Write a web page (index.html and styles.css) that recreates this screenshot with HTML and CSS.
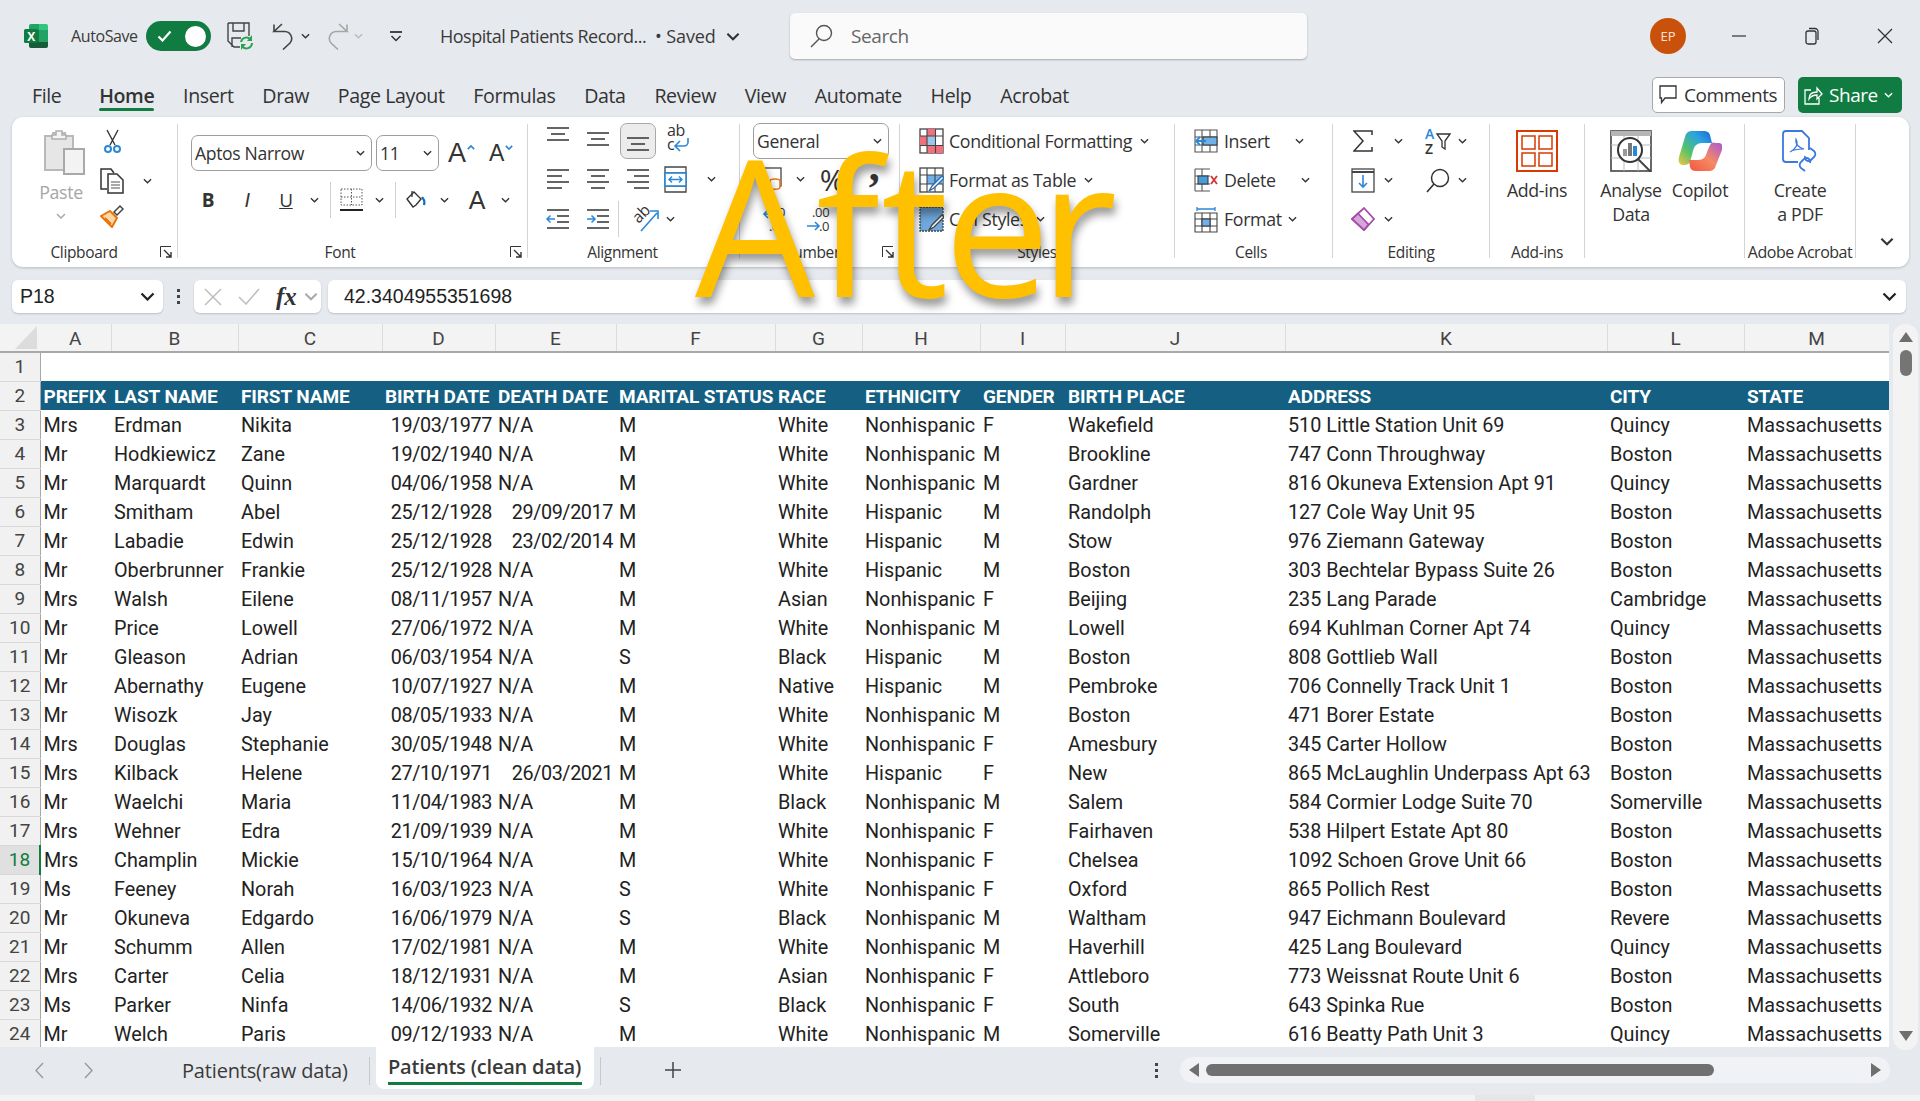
FILE: index.html
```html
<!DOCTYPE html>
<html lang="en">
<head>
    <meta charset="UTF-8">
    <title>Hospital Patients Records - Excel</title>
    <link rel="stylesheet" href="styles.css">
</head>
<body>
<svg class="sprite" width="0" height="0">
    <symbol id="chev" viewBox="0 0 10 6"><path d="M1 1l4 4 4-4" fill="none" stroke="currentColor" stroke-width="1.5"/></symbol>
</svg>

<div class="app">
    <!-- title bar -->
    <header class="titlebar">
        <svg class="logo" width="24" height="24" viewBox="0 0 24 24">
            <path d="M7 0h8v6H5V2a2 2 0 0 1 2-2z" fill="#21a366"/>
            <path d="M15 0h7a2 2 0 0 1 2 2v4h-9z" fill="#33c481"/>
            <rect x="5" y="6" width="10" height="12" fill="#107c41"/>
            <rect x="15" y="6" width="9" height="12" fill="#21a366"/>
            <path d="M5 18h19v4a2 2 0 0 1-2 2H7a2 2 0 0 1-2-2z" fill="#185c37"/>
            <rect x="0" y="5" width="14" height="14" rx="1.5" fill="#107c41"/>
            <text x="7" y="16.5" class="logo-x">X</text>
        </svg>
        <span class="autosave">AutoSave</span>
        <div class="toggle">
            <svg width="15" height="12" viewBox="0 0 15 12"><path d="M1.5 6.5l4 4 8-9" fill="none" stroke="#fff" stroke-width="2.2"/></svg>
            <span class="knob"></span>
        </div>
        <svg class="qat-save" width="26" height="28" viewBox="0 0 26 28">
            <path d="M1 1h21v13M1 1v18l6 6h6M6 1v8h11V1M5 25v-9h9" fill="none" stroke="#444" stroke-width="1.4"/>
            <path d="M14 20a5.500 5.500 0 0 1 10-2M25 21a5.500 5.500 0 0 1-10 3" fill="none" stroke="#2ca24f" stroke-width="2"/>
            <path d="M25 13v6h-5zM14 28v-6h5z" fill="#2ca24f"/>
        </svg>
        <svg class="qat-undo" width="22" height="27" viewBox="0 0 22 27"><path d="M10 1L2 8.500h11a7 7 0 0 1 5 11.500l-7 6.500M2 8.500V1.500" fill="none" stroke="#444" stroke-width="1.6"/></svg>
        <svg class="qat-chev" width="9" height="6"><use href="#chev"/></svg>
        <svg class="qat-redo" width="22" height="27" viewBox="0 0 22 27"><path d="M12 1l8 7.500H9A7 7 0 0 0 4 20l7 6.500M20 8.500V1.500" fill="none" stroke="#a6a6a6" stroke-width="1.6"/></svg>
        <svg class="qat-chev off" width="9" height="6"><use href="#chev"/></svg>
        <svg class="qat-more" width="12" height="11" viewBox="0 0 12 11"><path d="M0 1h12" stroke="#333" stroke-width="1.800"/><path d="M1.500 5l4.500 4.500L10.500 5" fill="none" stroke="#333" stroke-width="1.500"/></svg>
        <span class="docname">Hospital Patients Record...</span>
        <span class="saved">• Saved</span>
        <svg class="doc-chev" width="14" height="9"><use href="#chev"/></svg>
        <div class="search">
            <svg width="23" height="24" viewBox="0 0 23 24"><circle cx="14" cy="9" r="7.500" fill="none" stroke="#555" stroke-width="1.400"/><path d="M9 15l-8 8" stroke="#555" stroke-width="1.400"/></svg>
            <span>Search</span>
        </div>
        <div class="avatar">EP</div>
        <div class="winbtns">
            <svg width="16" height="16" viewBox="0 0 16 16"><path d="M1 8h14" stroke="#333" stroke-width="1.200"/></svg>
            <svg width="16" height="18" viewBox="0 0 16 18"><rect x="2" y="4" width="10" height="13" rx="2" fill="none" stroke="#333" stroke-width="1.300"/><path d="M5 1.500h6a3 3 0 0 1 3 3V13" fill="none" stroke="#333" stroke-width="1.300"/></svg>
            <svg width="16" height="16" viewBox="0 0 16 16"><path d="M1 1l14 14M15 1L1 15" stroke="#333" stroke-width="1.300"/></svg>
        </div>
    </header>

    <!-- ribbon tabs -->
    <nav class="tabs">
        <a>File</a><a class="current">Home</a><a>Insert</a><a>Draw</a><a>Page Layout</a><a>Formulas</a><a>Data</a><a>Review</a><a>View</a><a>Automate</a><a>Help</a><a>Acrobat</a>
        <div class="tabs-right">
            <button class="btn-comments">
                <svg width="18" height="20" viewBox="0 0 18 20"><path d="M1 1h16v12H6l-3.500 4.500V13H1z" fill="none" stroke="#333" stroke-width="1.300"/></svg>
                Comments
            </button>
            <button class="btn-share">
                <svg width="19" height="20" viewBox="0 0 19 20"><path d="M7 5H1v14h14v-6M5 14c0-5 3-7 8-7V3l5 6-5 5v-4c-3 0-6 1-8 4z" fill="none" stroke="#fff" stroke-width="1.300"/></svg>
                Share
                <svg width="9" height="6"><use href="#chev"/></svg>
            </button>
        </div>
    </nav>

    <!-- ribbon -->
    <section class="ribbon">
        <div class="group g-clip">
            <div class="group-body clip-body">
                <div class="paste">
                    <svg class="paste-icon" width="41" height="45" viewBox="0 0 41 45">
                        <path d="M1 6h8V3h12v3h8v34H1z" fill="#e6e6e6" stroke="#b9b9b9" stroke-width="2"/>
                        <path d="M12 1h6v4h4v4H8V5h4z" fill="#f4f4f4" stroke="#b0b0b0" stroke-width="1.500"/>
                        <rect x="20" y="19" width="20" height="25" fill="#f3f3f3" stroke="#a9a9a9" stroke-width="2"/>
                    </svg>
                    <span>Paste</span>
                    <svg class="paste-chev" width="10" height="6"><use href="#chev"/></svg>
                </div>
                <div class="clip-small">
                    <svg class="scissors" width="17" height="25" viewBox="0 0 17 25">
                        <path d="M3 1l8 15M14 1L6 16" stroke="#333" stroke-width="1.400"/>
                        <circle cx="4" cy="20" r="3" fill="none" stroke="#2b88d8" stroke-width="2"/>
                        <circle cx="13" cy="20" r="3" fill="none" stroke="#2b88d8" stroke-width="2"/>
                    </svg>
                    <div class="copy-row">
                        <svg width="24" height="26" viewBox="0 0 24 26">
                            <path d="M7 21H1V1h10l3 4" fill="none" stroke="#333" stroke-width="1.500"/>
                            <path d="M8 6h9l6 6v13H8z" fill="#fff" stroke="#333" stroke-width="1.500"/>
                            <path d="M11 14h9M11 17h9M11 20h9" stroke="#555" stroke-width="1.200"/>
                        </svg>
                        <svg class="chev-sm" width="9" height="6"><use href="#chev"/></svg>
                    </div>
                    <svg class="brush" width="24" height="24" viewBox="0 0 24 24">
                        <path d="M1 12l9-5 7 7-5 9z" fill="#fbd7a8" stroke="#e8750a" stroke-width="2"/>
                        <path d="M5 14l6 6" stroke="#e8750a" stroke-width="2"/>
                        <path d="M14 8l6-6 3 3-6 6z" fill="#fff" stroke="#444" stroke-width="1.500"/>
                    </svg>
                </div>
            </div>
            <div class="group-label"><span></span><span class="lbl">Clipboard</span><svg class="launcher" width="12" height="12" viewBox="0 0 12 12"><path d="M.5 11V.5H11" fill="none" stroke="#333"/><path d="M4 4l7 7M11 6v5H6" fill="none" stroke="#333" stroke-width="1.400"/></svg></div>
        </div>

        <div class="group g-font">
            <div class="group-body font-body">
                <div class="row font-row1">
                    <div class="select w181">Aptos Narrow<svg width="9" height="6"><use href="#chev"/></svg></div>
                    <div class="select w63">11<svg width="9" height="6"><use href="#chev"/></svg></div>
                    <div class="fsize grow">A<svg width="8" height="5" viewBox="0 0 10 6"><path d="M1 5l4-4 4 4" fill="none" stroke="#2b88d8" stroke-width="2"/></svg></div>
                    <div class="fsize shrink">A<svg width="8" height="5" viewBox="0 0 10 6"><path d="M1 1l4 4 4-4" fill="none" stroke="#2b88d8" stroke-width="2"/></svg></div>
                </div>
                <div class="row font-row2">
                    <span class="cell w40 fmt-b">B</span>
                    <span class="cell w38 fmt-i">I</span>
                    <span class="cell w40 fmt-u">U</span>
                    <span class="cell w16"><svg width="9" height="6"><use href="#chev"/></svg></span>
                    <span class="sep"></span>
                    <span class="cell w24">
                        <svg width="23" height="24" viewBox="0 0 23 24"><path d="M1 1h21v16H1zM11.500 1v16M1 9h21" fill="none" stroke="#555" stroke-width="1" stroke-dasharray="1.500 1.500"/><path d="M0 22h23" stroke="#222" stroke-width="2"/></svg>
                    </span>
                    <span class="cell w32"><svg width="9" height="6"><use href="#chev"/></svg></span>
                    <span class="sep flush"></span>
                    <span class="cell w24">
                        <svg width="20" height="20" viewBox="0 0 20 20"><path d="M1 9l7-7 7 7-5 6-3 2z" fill="none" stroke="#333" stroke-width="1.400"/><path d="M6 1v6" stroke="#333" stroke-width="1.300"/><path d="M16 7c2 3 3 4 2 8" fill="none" stroke="#106ebe" stroke-width="2.200"/></svg>
                    </span>
                    <span class="cell w32"><svg width="9" height="6"><use href="#chev"/></svg></span>
                    <span class="cell w34 fmt-a">A</span>
                    <span class="cell w22"><svg width="9" height="6"><use href="#chev"/></svg></span>
                </div>
            </div>
            <div class="group-label"><span></span><span class="lbl">Font</span><svg class="launcher" width="12" height="12" viewBox="0 0 12 12"><path d="M.5 11V.5H11" fill="none" stroke="#333"/><path d="M4 4l7 7M11 6v5H6" fill="none" stroke="#333" stroke-width="1.400"/></svg></div>
        </div>

        <div class="group g-align">
            <div class="group-body tool-rows align-body">
                <div class="row">
                    <span class="cell w40"><svg width="24" height="24" viewBox="0 0 24 24"><path d="M1 5h22M5 11h14M1 17h22" stroke="#333" stroke-width="1.500" transform="translate(0 -4)"/></svg></span>
                    <span class="cell w40"><svg width="24" height="24" viewBox="0 0 24 24"><path d="M1 5h22M5 11h14M1 17h22" stroke="#333" stroke-width="1.500" transform="translate(0 1)"/></svg></span>
                    <span class="cell w40 on-cell"><span class="on"><svg width="24" height="24" viewBox="0 0 24 24"><path d="M1 5h22M5 11h14M1 17h22" stroke="#333" stroke-width="1.500" transform="translate(0 4)"/></svg></span></span>
                    <span class="cell w40"><svg width="24" height="30" viewBox="0 0 24 30"><text x="1" y="12" class="t-ab">ab</text><text x="1" y="26" class="t-ab">c</text><path d="M22 14v4a4 4 0 0 1-4 4h-8M14 17l-5 5 5 5" fill="none" stroke="#2b88d8" stroke-width="1.600"/></svg></span>
                </div>
                <div class="row">
                    <span class="cell w40"><svg width="24" height="22" viewBox="0 0 24 22"><path d="M1 2h22M1 8h15M1 14h22M1 20h15" stroke="#333" stroke-width="1.500"/></svg></span>
                    <span class="cell w40"><svg width="24" height="22" viewBox="0 0 24 22"><path d="M1 2h22M5 8h14M1 14h22M5 20h14" stroke="#333" stroke-width="1.500"/></svg></span>
                    <span class="cell w40"><svg width="24" height="22" viewBox="0 0 24 22"><path d="M1 2h22M8 8h15M1 14h22M8 20h15" stroke="#333" stroke-width="1.500"/></svg></span>
                    <span class="cell w34"><svg width="23" height="27" viewBox="0 0 23 27"><path d="M1 1h21v25H1zM1 7h21M1 20h21" fill="none" stroke="#444" stroke-width="1.300"/><rect x="1" y="7" width="21" height="13" fill="#fff" stroke="#2b88d8" stroke-width="1.600"/><path d="M5 13.500h13M8 10.500l-3 3 3 3M15 10.500l3 3-3 3" fill="none" stroke="#2b88d8" stroke-width="1.400"/></svg></span>
                    <span class="cell w38"><svg width="9" height="6"><use href="#chev"/></svg></span>
                </div>
                <div class="row">
                    <span class="cell w40"><svg width="24" height="22" viewBox="0 0 24 22"><path d="M1 2h22M11 8h12M11 14h12M1 20h22" stroke="#333" stroke-width="1.500"/><path d="M1 11h8M4.500 7.500L1 11l3.500 3.500" fill="none" stroke="#2b88d8" stroke-width="1.500"/></svg></span>
                    <span class="cell w40"><svg width="24" height="22" viewBox="0 0 24 22"><path d="M1 2h22M11 8h12M11 14h12M1 20h22" stroke="#333" stroke-width="1.500"/><path d="M1 11h8M5.500 7.500L9 11l-3.500 3.500" fill="none" stroke="#2b88d8" stroke-width="1.500"/></svg></span>
                    <span class="sep flush"></span>
                    <span class="cell w36"><svg width="27" height="28" viewBox="0 0 27 28"><text x="2" y="16" class="t-ab" transform="rotate(-45 8 12)">ab</text><path d="M9 26L25 8M18 6h8v8" fill="none" stroke="#2b88d8" stroke-width="1.600"/></svg></span>
                    <span class="cell w14"><svg width="9" height="6"><use href="#chev"/></svg></span>
                </div>
            </div>
            <div class="group-label"><span></span><span class="lbl">Alignment</span><span></span></div>
        </div>

        <div class="group g-num">
            <div class="group-body tool-rows num-body">
                <div class="row"><div class="select w136 num-select">General<svg width="9" height="6"><use href="#chev"/></svg></div></div>
                <div class="row">
                    <span class="cell w40"><svg width="20" height="24" viewBox="0 0 20 24"><rect x="1" y="1" width="17" height="18" fill="none" stroke="#444" stroke-width="1.300"/><ellipse cx="12" cy="14" rx="5" ry="2" fill="#fff" stroke="#e8750a" stroke-width="1.500"/><path d="M7 14v6c0 3 10 3 10 0v-6" fill="#fff" stroke="#e8750a" stroke-width="1.500"/></svg></span>
                    <span class="cell w14"><svg width="9" height="6"><use href="#chev"/></svg></span>
                    <span class="cell w50 n-pct">%</span>
                    <span class="cell w34 n-comma">,</span>
                </div>
                <div class="row">
                    <span class="cell w44"><svg width="26" height="28" viewBox="0 0 26 28"><text x="13" y="12" class="t-dec">.0</text><text x="7" y="26" class="t-dec">.00</text><path d="M14 9H2M6 5L2 9l4 4" fill="none" stroke="#2b88d8" stroke-width="1.600"/></svg></span>
                    <span class="cell w44"><svg width="26" height="28" viewBox="0 0 26 28"><text x="6" y="12" class="t-dec">.00</text><text x="13" y="26" class="t-dec">.0</text><path d="M1 21h12M9 17l4 4-4 4" fill="none" stroke="#2b88d8" stroke-width="1.600"/></svg></span>
                </div>
            </div>
            <div class="group-label"><span></span><span class="lbl">Number</span><svg class="launcher" width="12" height="12" viewBox="0 0 12 12"><path d="M.5 11V.5H11" fill="none" stroke="#333"/><path d="M4 4l7 7M11 6v5H6" fill="none" stroke="#333" stroke-width="1.400"/></svg></div>
        </div>

        <div class="group g-styles">
            <div class="group-body tool-rows styles-body">
                <div class="row item">
                    <svg width="25" height="26" viewBox="0 0 25 26"><rect x="1" y="1" width="23" height="24" fill="#fff" stroke="#444" stroke-width="1.300"/><path d="M8 1h9v7H8zM1 8h7v10H1zM8 18h16v7H8z" fill="#f1707b"/><rect x="8" y="8" width="8" height="10" fill="#9cc7ea"/><path d="M1 8h23M1 17.500h23M8 1v24M16.500 1v24" stroke="#444" stroke-width="1.100"/></svg>
                    <span>Conditional Formatting</span><svg width="9" height="6"><use href="#chev"/></svg>
                </div>
                <div class="row item">
                    <svg width="25" height="26" viewBox="0 0 25 26"><rect x="1" y="1" width="23" height="24" fill="#fff" stroke="#444" stroke-width="1.300"/><path d="M8 8h16v9H8z" fill="#6fb1e8"/><path d="M1 8h23M1 17h23M8 1v24M16 1v24" stroke="#444" stroke-width="1.100"/><path d="M10 24l3-5 10-10 2 2-10 10z" fill="#fff" stroke="#2b6cb0" stroke-width="1.400"/></svg>
                    <span>Format as Table</span><svg width="9" height="6"><use href="#chev"/></svg>
                </div>
                <div class="row item">
                    <svg width="25" height="26" viewBox="0 0 25 26"><rect x="1" y="1" width="23" height="24" fill="#6fa8dc" stroke="#444" stroke-width="1.300" stroke-dasharray="2 1"/><path d="M10 24l3-5 10-10 2 2-10 10z" fill="#fff" stroke="#444" stroke-width="1.400"/></svg>
                    <span>Cell Styles</span><svg width="9" height="6"><use href="#chev"/></svg>
                </div>
            </div>
            <div class="group-label"><span></span><span class="lbl">Styles</span><span></span></div>
        </div>

        <div class="group g-cells">
            <div class="group-body tool-rows cells-body">
                <div class="row item ins">
                    <svg width="24" height="24" viewBox="0 0 24 24"><path d="M1 1h22v22H1zM1 8h22M1 16h22M8 1v22M16 1v22" fill="none" stroke="#555" stroke-width="1.100"/><rect x="9" y="8" width="14" height="8" fill="#6fb1e8" stroke="#333"/><path d="M12 12H2M6 8l-4 4 4 4" fill="none" stroke="#2b88d8" stroke-width="1.800"/></svg>
                    <span>Insert</span><svg class="push" width="9" height="6"><use href="#chev"/></svg>
                </div>
                <div class="row item del">
                    <svg width="24" height="24" viewBox="0 0 24 24"><path d="M1 1h15M1 8h15M1 16h15M1 23h15M8 1v7M8 16v7M1 1v22" fill="none" stroke="#555" stroke-width="1.100"/><rect x="4" y="8" width="10" height="8" fill="#4a9bdc" stroke="#333"/><path d="M17 8l6 8M23 8l-6 8" stroke="#d13438" stroke-width="1.800"/></svg>
                    <span>Delete</span><svg class="push" width="9" height="6"><use href="#chev"/></svg>
                </div>
                <div class="row item fmtc">
                    <svg width="24" height="27" viewBox="0 0 24 27"><path d="M3 1v4M21 1v4M3 3h18" stroke="#2b88d8" stroke-width="1.300"/><path d="M1 7h22v19H1zM1 13h22M1 20h22M8 7v19M16 7v19" fill="none" stroke="#444" stroke-width="1.100"/><rect x="8" y="13" width="8" height="7" fill="#6fb1e8" stroke="#333"/></svg>
                    <span>Format</span><svg class="push" width="9" height="6"><use href="#chev"/></svg>
                </div>
            </div>
            <div class="group-label"><span></span><span class="lbl">Cells</span><span></span></div>
        </div>

        <div class="group g-edit">
            <div class="group-body tool-rows edit-body">
                <div class="row">
                    <span class="cell w24"><svg width="20" height="22" viewBox="0 0 20 22"><path d="M19 5V1H1l9 10-9 10h18v-4" fill="none" stroke="#333" stroke-width="1.500"/></svg></span>
                    <span class="cell w46"><svg width="9" height="6"><use href="#chev"/></svg></span>
                    <span class="cell w26 ml4"><svg width="26" height="28" viewBox="0 0 26 28"><text x="0" y="12" class="t-az az-a">A</text><text x="0" y="27" class="t-az">Z</text><path d="M12 7h13l-5 7v8l-3-2v-6z" fill="none" stroke="#333" stroke-width="1.300"/></svg></span>
                    <span class="cell w22"><svg width="9" height="6"><use href="#chev"/></svg></span>
                </div>
                <div class="row">
                    <span class="cell w24"><svg width="24" height="25" viewBox="0 0 24 25"><rect x="1" y="1" width="22" height="23" fill="none" stroke="#444" stroke-width="1.300"/><path d="M1 4h22" stroke="#444" stroke-width="2"/><path d="M12 7v12M8 15l4 4 4-4" fill="none" stroke="#2b88d8" stroke-width="1.600"/></svg></span>
                    <span class="cell w26"><svg width="9" height="6"><use href="#chev"/></svg></span>
                    <span class="cell w20"></span>
                    <span class="cell w26 ml4"><svg width="24" height="25" viewBox="0 0 24 25"><circle cx="14" cy="10" r="8.500" fill="none" stroke="#333" stroke-width="1.500"/><path d="M8 16l-7 8" stroke="#333" stroke-width="1.600"/></svg></span>
                    <span class="cell w22"><svg width="9" height="6"><use href="#chev"/></svg></span>
                </div>
                <div class="row">
                    <span class="cell w24"><svg width="24" height="24" viewBox="0 0 24 24"><path d="M13 1l10 11-10 11L1 12z" fill="#fff" stroke="#a64ca6" stroke-width="1.800"/><path d="M7 6.500l10.500 11L13 23 1 12z" fill="#d5a6d9" stroke="#a64ca6" stroke-width="1.800"/></svg></span>
                    <span class="cell w26"><svg width="9" height="6"><use href="#chev"/></svg></span>
                </div>
            </div>
            <div class="group-label"><span></span><span class="lbl">Editing</span><span></span></div>
        </div>

        <div class="group g-addins">
            <div class="group-body big-body">
                <div class="big">
                    <svg width="42" height="42" viewBox="0 0 42 42"><rect x="1" y="1" width="40" height="40" fill="none" stroke="#d83b01" stroke-width="2"/><path d="M6 6h13v13H6zM23 6h13v13H23zM6 23h13v13H6zM23 23h13v13H23z" fill="none" stroke="#d83b01" stroke-width="1.500"/></svg>
                    <span>Add-ins</span>
                </div>
            </div>
            <div class="group-label"><span></span><span class="lbl">Add-ins</span><span></span></div>
        </div>

        <div class="group g-ai">
            <div class="group-body big-body ai-body">
                <div class="big">
                    <svg width="42" height="42" viewBox="0 0 42 42">
                        <rect x="1" y="1" width="40" height="40" fill="#fff" stroke="#444" stroke-width="1.600"/>
                        <rect x="1" y="1" width="40" height="5" fill="#b5b5b5"/>
                        <path d="M1 15h40M1 28h40M14 6v35M28 6v35" stroke="#bbb"/>
                        <circle cx="20" cy="20" r="12" fill="#fff" stroke="#333" stroke-width="2"/>
                        <path d="M28 29l13 13" stroke="#444" stroke-width="2"/>
                        <rect x="13" y="19" width="4" height="7" fill="#999"/><rect x="18" y="13" width="4" height="13" fill="#777"/><rect x="23" y="16" width="4" height="10" fill="#2b88d8"/>
                    </svg>
                    <span>Analyse<br>Data</span>
                </div>
                <div class="big">
                    <svg width="44" height="42" viewBox="0 0 44 42">
                        <defs>
                            <linearGradient id="cpA" x1="0" y1="1" x2="1" y2="0"><stop offset="0" stop-color="#f5c53b"/><stop offset=".35" stop-color="#52c26d"/><stop offset=".7" stop-color="#2aa3e0"/><stop offset="1" stop-color="#1c62d8"/></linearGradient>
                            <linearGradient id="cpB" x1="0" y1="1" x2="1" y2="0"><stop offset="0" stop-color="#f0563f"/><stop offset=".5" stop-color="#f58a63"/><stop offset="1" stop-color="#a956d8"/></linearGradient>
                        </defs>
                        <path d="M14 1h12c3 0 5 1 6 4l2 8H24c-5 0-8 3-9 8l-3 11c-1 2-3 3-6 3H5C1 35 0 31 1 27L7 7c1-4 3-6 7-6z" fill="url(#cpA)"/>
                        <path d="M30 41H18c-3 0-5-1-6-4l-1-7h9c5 0 8-3 9-8l3-7c1-2 3-3 5-2h4c3 0 4 3 3 7l-6 15c-1 4-3 6-8 6z" fill="url(#cpB)"/>
                    </svg>
                    <span>Copilot</span>
                </div>
            </div>
            <div class="group-label"><span></span><span></span><span></span></div>
        </div>

        <div class="group g-pdf">
            <div class="group-body big-body">
                <div class="big">
                    <svg class="pdf-icon" width="40" height="44" viewBox="0 0 40 44">
                        <path d="M18 32H6a3 3 0 0 1-3-3V4a3 3 0 0 1 3-3h16l7 7v12" fill="none" stroke="#3b78e0" stroke-width="1.800"/>
                        <path d="M10 22c5-2 9-8 6-13-1 5 3 9 8 10-5 0-10 0-14 3z" fill="none" stroke="#3b78e0" stroke-width="1.200"/>
                        <path d="M30 18l4 3a4 4 0 0 1 0 6l-4 4a4 4 0 0 1-5-5M25 41l-4-3a4 4 0 0 1 0-6l4-4a4 4 0 0 1 5 5" fill="none" stroke="#3b78e0" stroke-width="1.800"/>
                    </svg>
                    <span>Create<br>a PDF</span>
                </div>
            </div>
            <div class="group-label"><span></span><span class="lbl">Adobe Acrobat</span><span></span></div>
        </div>

        <div class="collapse"><svg width="14" height="9"><use href="#chev"/></svg></div>
    </section>

    <!-- formula bar -->
    <section class="formula">
        <div class="namebox">P18<svg width="15" height="9"><use href="#chev"/></svg></div>
        <div class="fdots"><i></i><i></i><i></i></div>
        <div class="fxbox">
            <svg width="18" height="18" viewBox="0 0 18 18"><path d="M1 1l16 16M17 1L1 17" stroke="#bdbdbd" stroke-width="1.500"/></svg>
            <svg width="22" height="17" viewBox="0 0 22 17"><path d="M1 9l7 7L21 1" fill="none" stroke="#bdbdbd" stroke-width="1.500"/></svg>
            <span class="fx">fx</span>
            <svg class="fx-chev" width="14" height="9"><use href="#chev"/></svg>
        </div>
        <div class="fvalue">42.3404955351698<svg width="15" height="9"><use href="#chev"/></svg></div>
    </section>

    <!-- sheet -->
    <section class="sheet">
        <div class="grid">
            <table>
                <colgroup>
                    <col class="c-rh"><col class="c-a"><col class="c-b"><col class="c-c"><col class="c-d"><col class="c-e"><col class="c-f"><col class="c-g"><col class="c-h"><col class="c-i"><col class="c-j"><col class="c-k"><col class="c-l"><col class="c-m">
                </colgroup>
                <thead>
                    <tr>
                        <th class="corner"><svg width="22" height="23" viewBox="0 0 22 23"><path d="M22 0v23H0z" fill="#dcdcdc"/></svg></th>
                        <th>A</th><th>B</th><th>C</th><th>D</th><th>E</th><th>F</th><th>G</th><th>H</th><th>I</th><th>J</th><th>K</th><th>L</th><th>M</th>
                    </tr>
                </thead>
                <tbody>
                    <tr><th>1</th><td colspan="13"></td></tr>
                    <tr class="hdr"><th>2</th><td>PREFIX</td><td>LAST NAME</td><td>FIRST NAME</td><td>BIRTH DATE</td><td>DEATH DATE</td><td>MARITAL STATUS</td><td>RACE</td><td>ETHNICITY</td><td>GENDER</td><td>BIRTH PLACE</td><td>ADDRESS</td><td>CITY</td><td>STATE</td></tr>
                    <tr><th>3</th><td>Mrs</td><td>Erdman</td><td>Nikita</td><td>19/03/1977</td><td>N/A</td><td>M</td><td>White</td><td>Nonhispanic</td><td>F</td><td>Wakefield</td><td>510 Little Station Unit 69</td><td>Quincy</td><td>Massachusetts</td></tr>
                    <tr><th>4</th><td>Mr</td><td>Hodkiewicz</td><td>Zane</td><td>19/02/1940</td><td>N/A</td><td>M</td><td>White</td><td>Nonhispanic</td><td>M</td><td>Brookline</td><td>747 Conn Throughway</td><td>Boston</td><td>Massachusetts</td></tr>
                    <tr><th>5</th><td>Mr</td><td>Marquardt</td><td>Quinn</td><td>04/06/1958</td><td>N/A</td><td>M</td><td>White</td><td>Nonhispanic</td><td>M</td><td>Gardner</td><td>816 Okuneva Extension Apt 91</td><td>Quincy</td><td>Massachusetts</td></tr>
                    <tr><th>6</th><td>Mr</td><td>Smitham</td><td>Abel</td><td>25/12/1928</td><td class="r">29/09/2017</td><td>M</td><td>White</td><td>Hispanic</td><td>M</td><td>Randolph</td><td>127 Cole Way Unit 95</td><td>Boston</td><td>Massachusetts</td></tr>
                    <tr><th>7</th><td>Mr</td><td>Labadie</td><td>Edwin</td><td>25/12/1928</td><td class="r">23/02/2014</td><td>M</td><td>White</td><td>Hispanic</td><td>M</td><td>Stow</td><td>976 Ziemann Gateway</td><td>Boston</td><td>Massachusetts</td></tr>
                    <tr><th>8</th><td>Mr</td><td>Oberbrunner</td><td>Frankie</td><td>25/12/1928</td><td>N/A</td><td>M</td><td>White</td><td>Hispanic</td><td>M</td><td>Boston</td><td>303 Bechtelar Bypass Suite 26</td><td>Boston</td><td>Massachusetts</td></tr>
                    <tr><th>9</th><td>Mrs</td><td>Walsh</td><td>Eilene</td><td>08/11/1957</td><td>N/A</td><td>M</td><td>Asian</td><td>Nonhispanic</td><td>F</td><td>Beijing</td><td>235 Lang Parade</td><td>Cambridge</td><td>Massachusetts</td></tr>
                    <tr><th>10</th><td>Mr</td><td>Price</td><td>Lowell</td><td>27/06/1972</td><td>N/A</td><td>M</td><td>White</td><td>Nonhispanic</td><td>M</td><td>Lowell</td><td>694 Kuhlman Corner Apt 74</td><td>Quincy</td><td>Massachusetts</td></tr>
                    <tr><th>11</th><td>Mr</td><td>Gleason</td><td>Adrian</td><td>06/03/1954</td><td>N/A</td><td>S</td><td>Black</td><td>Hispanic</td><td>M</td><td>Boston</td><td>808 Gottlieb Wall</td><td>Boston</td><td>Massachusetts</td></tr>
                    <tr><th>12</th><td>Mr</td><td>Abernathy</td><td>Eugene</td><td>10/07/1927</td><td>N/A</td><td>M</td><td>Native</td><td>Hispanic</td><td>M</td><td>Pembroke</td><td>706 Connelly Track Unit 1</td><td>Boston</td><td>Massachusetts</td></tr>
                    <tr><th>13</th><td>Mr</td><td>Wisozk</td><td>Jay</td><td>08/05/1933</td><td>N/A</td><td>M</td><td>White</td><td>Nonhispanic</td><td>M</td><td>Boston</td><td>471 Borer Estate</td><td>Boston</td><td>Massachusetts</td></tr>
                    <tr><th>14</th><td>Mrs</td><td>Douglas</td><td>Stephanie</td><td>30/05/1948</td><td>N/A</td><td>M</td><td>White</td><td>Nonhispanic</td><td>F</td><td>Amesbury</td><td>345 Carter Hollow</td><td>Boston</td><td>Massachusetts</td></tr>
                    <tr><th>15</th><td>Mrs</td><td>Kilback</td><td>Helene</td><td>27/10/1971</td><td class="r">26/03/2021</td><td>M</td><td>White</td><td>Hispanic</td><td>F</td><td>New</td><td>865 McLaughlin Underpass Apt 63</td><td>Boston</td><td>Massachusetts</td></tr>
                    <tr><th>16</th><td>Mr</td><td>Waelchi</td><td>Maria</td><td>11/04/1983</td><td>N/A</td><td>M</td><td>Black</td><td>Nonhispanic</td><td>M</td><td>Salem</td><td>584 Cormier Lodge Suite 70</td><td>Somerville</td><td>Massachusetts</td></tr>
                    <tr><th>17</th><td>Mrs</td><td>Wehner</td><td>Edra</td><td>21/09/1939</td><td>N/A</td><td>M</td><td>White</td><td>Nonhispanic</td><td>F</td><td>Fairhaven</td><td>538 Hilpert Estate Apt 80</td><td>Boston</td><td>Massachusetts</td></tr>
                    <tr class="selected"><th>18</th><td>Mrs</td><td>Champlin</td><td>Mickie</td><td>15/10/1964</td><td>N/A</td><td>M</td><td>White</td><td>Nonhispanic</td><td>F</td><td>Chelsea</td><td>1092 Schoen Grove Unit 66</td><td>Boston</td><td>Massachusetts</td></tr>
                    <tr><th>19</th><td>Ms</td><td>Feeney</td><td>Norah</td><td>16/03/1923</td><td>N/A</td><td>S</td><td>White</td><td>Nonhispanic</td><td>F</td><td>Oxford</td><td>865 Pollich Rest</td><td>Boston</td><td>Massachusetts</td></tr>
                    <tr><th>20</th><td>Mr</td><td>Okuneva</td><td>Edgardo</td><td>16/06/1979</td><td>N/A</td><td>S</td><td>Black</td><td>Nonhispanic</td><td>M</td><td>Waltham</td><td>947 Eichmann Boulevard</td><td>Revere</td><td>Massachusetts</td></tr>
                    <tr><th>21</th><td>Mr</td><td>Schumm</td><td>Allen</td><td>17/02/1981</td><td>N/A</td><td>M</td><td>White</td><td>Nonhispanic</td><td>M</td><td>Haverhill</td><td>425 Lang Boulevard</td><td>Quincy</td><td>Massachusetts</td></tr>
                    <tr><th>22</th><td>Mrs</td><td>Carter</td><td>Celia</td><td>18/12/1931</td><td>N/A</td><td>M</td><td>Asian</td><td>Nonhispanic</td><td>F</td><td>Attleboro</td><td>773 Weissnat Route Unit 6</td><td>Boston</td><td>Massachusetts</td></tr>
                    <tr><th>23</th><td>Ms</td><td>Parker</td><td>Ninfa</td><td>14/06/1932</td><td>N/A</td><td>S</td><td>Black</td><td>Nonhispanic</td><td>F</td><td>South</td><td>643 Spinka Rue</td><td>Boston</td><td>Massachusetts</td></tr>
                    <tr><th>24</th><td>Mr</td><td>Welch</td><td>Paris</td><td>09/12/1933</td><td>N/A</td><td>M</td><td>White</td><td>Nonhispanic</td><td>M</td><td>Somerville</td><td>616 Beatty Path Unit 3</td><td>Quincy</td><td>Massachusetts</td></tr>
                </tbody>
            </table>
        </div>
        <div class="vscroll">
            <span class="tri-up"></span>
            <span class="vthumb"></span>
            <span class="tri-down"></span>
        </div>
    </section>

    <!-- sheet tabs -->
    <footer class="sheetbar">
        <div class="navarrows">
            <svg width="9" height="17" viewBox="0 0 9 17"><path d="M8 1L1 8.500 8 16" fill="none" stroke="#999" stroke-width="1.400"/></svg>
            <svg width="9" height="17" viewBox="0 0 9 17"><path d="M1 1l7 7.500L1 16" fill="none" stroke="#999" stroke-width="1.400"/></svg>
        </div>
        <span class="sheet-tab">Patients(raw data)</span>
        <span class="tab-sep"></span>
        <span class="sheet-tab active"><b>Patients (clean data)</b></span>
        <span class="tab-sep"></span>
        <svg class="addsheet" width="18" height="18" viewBox="0 0 18 18"><path d="M9 1v16M1 9h16" stroke="#444" stroke-width="1.500"/></svg>
        <div class="tabdots"><i></i><i></i><i></i></div>
        <div class="hscroll">
            <span class="tri-left"></span>
            <span class="hthumb"></span>
            <span class="tri-right"></span>
        </div>
    </footer>
    <div class="statusbar"><span></span></div>

    <div class="after"><span class="after-af">Af</span>t<span class="after-e">e</span>r</div>
</div>
</body>
</html>
```
FILE: styles.css
```css
* {
    box-sizing: border-box;
}

html, body {
    margin: 0;
    padding: 0;
}

body {
    font-family: "Open Sans", sans-serif;
    color: #333;
    background: #e6e9ee;
}

svg {
    display: block;
    flex: none;
}

.sprite {
    position: absolute;
}

.app {
    position: relative;
    width: 1920px;
    height: 1101px;
    overflow: hidden;
    display: flex;
    flex-direction: column;
}

/* title bar */
.titlebar {
    height: 73px;
    display: flex;
    align-items: center;
    padding: 0 0 1px 24px;
    font-size: 18px;
    letter-spacing: -0.4px;
    color: #3a3a3a;
}

.logo-x {
    font: bold 12px "Open Sans", sans-serif;
    fill: #fff;
    text-anchor: middle;
}

.autosave {
    margin-left: 23px;
    width: 75px;
    font-size: 16px;
}

.toggle {
    width: 65px;
    height: 30px;
    border-radius: 15px;
    background: #107c41;
    display: flex;
    align-items: center;
    justify-content: space-between;
    padding: 0 5px 0 11px;
}

.knob {
    width: 21px;
    height: 21px;
    border-radius: 50%;
    background: #fff;
}

.qat-save { margin-left: 16px; }
.qat-undo { margin-left: 19px; }
.qat-chev { margin-left: 7px; color: #333; }
.qat-chev.off { margin-left: 5px; color: #bbb; }
.qat-redo { margin-left: 17px; }
.qat-more { margin-left: 27px; }

.docname {
    margin-left: 38px;
    width: 215px;
    white-space: nowrap;
    letter-spacing: -0.5px;
}

.saved {
    width: 71px;
    white-space: nowrap;
    letter-spacing: -0.1px;
}

.doc-chev {
    color: #333;
}

.search {
    margin-left: 50px;
    width: 517px;
    height: 46px;
    background: #fafafa;
    border-radius: 5px;
    box-shadow: 0 1px 2px rgba(0, 0, 0, 0.28);
    display: flex;
    align-items: center;
    padding-left: 20px;
    color: #666;
}

.search span {
    margin-left: 18px;
    font-size: 19px;
}

.avatar {
    margin-left: 343px;
    width: 36px;
    height: 36px;
    border-radius: 50%;
    background: #c9510c;
    color: #fbe3d6;
    font-size: 13px;
    letter-spacing: 0;
    display: flex;
    align-items: center;
    justify-content: center;
}

.winbtns {
    display: flex;
    align-items: center;
    margin-left: 45px;
    gap: 57px;
}

/* ribbon tabs */
.tabs {
    height: 44px;
    display: flex;
    align-items: center;
    gap: 28.800px;
    padding: 1px 18px 0 32px;
    font-size: 19.600px;
    letter-spacing: -0.4px;
    color: #333;
}

.tabs a {
    position: relative;
    white-space: nowrap;
}

.tabs a.current {
    font-weight: 600;
    margin-left: 9px;
}

.tabs a.current::after {
    content: "";
    position: absolute;
    left: 0;
    right: 0;
    bottom: -2px;
    height: 3px;
    border-radius: 2px;
    background: #107c41;
}

.tabs-right {
    margin-left: auto;
    display: flex;
    gap: 13px;
    margin-top: -2px;
}

.tabs-right button {
    height: 36px;
    border-radius: 5px;
    font: 19px "Open Sans", sans-serif;
    letter-spacing: -0.45px;
    display: flex;
    align-items: center;
    padding: 0;
}

.btn-comments {
    width: 133px;
    gap: 7px;
    padding-left: 6px !important;
    background: #fff;
    border: 1px solid #a8a8a8;
    color: #333;
}

.btn-share {
    width: 104px;
    gap: 6px;
    padding-left: 6px !important;
    background: #107c41;
    border: 0;
    color: #fff;
}

/* ribbon */
.ribbon {
    margin: 0 11px 0 12px;
    height: 150px;
    padding-top: 7px;
    background: #fff;
    border-radius: 11px;
    box-shadow: 0 1px 3px rgba(0, 0, 0, 0.2);
    display: flex;
    font-size: 17.800px;
    letter-spacing: -0.35px;
    color: #333;
}

.group {
    height: 134px;
    display: flex;
    flex-direction: column;
    border-right: 1px solid #d4d4d4;
    flex: none;
}

.group-body {
    height: 118px;
}

.group-label {
    height: 20px;
    margin-bottom: -4px;
    display: grid;
    grid-template-columns: 1fr auto 1fr;
    align-items: center;
    font-size: 15.500px;
    line-height: 20px;
    padding-right: 5px;
    white-space: nowrap;
}

.launcher {
    justify-self: end;
}

.g-clip { width: 166px; }
.g-font { width: 350px; }
.g-align { width: 212px; }
.g-num { width: 160px; }
.g-styles { width: 275px; }
.g-cells { width: 158px; }
.g-edit { width: 157px; }
.g-addins { width: 95px; }
.g-ai { width: 160px; }
.g-pdf { width: 111px; }

.g-clip .lbl { margin-right: 16px; }
.g-font .lbl { margin-right: 20px; }
.g-align .lbl { margin-right: 17px; }
.g-num .lbl { margin-right: 12px; }
.g-styles .lbl { margin-left: 5px; }

.g-addins .group-label,
.g-pdf .group-label,
.g-edit .group-label { padding-right: 0; }
.g-pdf .group-label { font-size: 16px; letter-spacing: -0.5px; }

.row {
    display: flex;
    align-items: center;
    height: 30px;
}

.tool-rows {
    display: flex;
    flex-direction: column;
    gap: 10px;
}

.cell {
    display: flex;
    align-items: center;
    justify-content: center;
    flex: none;
    height: 30px;
}

.w14 { width: 14px; }
.w16 { width: 16px; }
.w20 { width: 20px; }
.w22 { width: 22px; }
.w24 { width: 24px; }
.w26 { width: 26px; }
.w32 { width: 32px; }
.w34 { width: 34px; }
.w36 { width: 36px; }
.w38 { width: 38px; }
.w40 { width: 40px; }
.w44 { width: 44px; }
.w46 { width: 46px; }
.w50 { width: 50px; }
.w63 { width: 63px; }
.w136 { width: 136px; }
.w181 { width: 181px; }
.ml4 { margin-left: 4px; }

.sep {
    width: 1px;
    height: 36px;
    background: #d0d0d0;
    margin: 0 8px;
    flex: none;
}

.sep.flush {
    margin-left: 0;
}

/* clipboard */
.clip-body {
    display: flex;
    padding: 6px 0 0 24px;
}

.paste {
    width: 56px;
    margin-left: -3px;
    display: flex;
    flex-direction: column;
    align-items: center;
    color: #a6a6a6;
}

.paste-icon {
    margin-left: 7px;
}

.paste span {
    margin-top: 5px;
    line-height: 24px;
}

.paste-chev {
    margin-top: 9px;
    color: #aaa;
}

.clip-small {
    display: flex;
    flex-direction: column;
    margin-left: 2px;
    padding-left: 9px;
}

.scissors { margin: -1px 0 0 4px; }
.copy-row { display: flex; align-items: center; margin-top: 14px; }
.chev-sm { margin-left: 19px; }
.brush { margin-top: 10px; }

/* font */
.font-body {
    padding: 11px 0 0 13px;
}

.font-row1 {
    height: 36px;
    gap: 4px;
}

.select {
    height: 36px;
    border: 1px solid #9e9e9e;
    border-radius: 7px;
    display: flex;
    align-items: center;
    justify-content: space-between;
    padding: 0 6px 0 3px;
    white-space: nowrap;
    font-size: 17.600px;
    flex: none;
}

.fsize {
    position: relative;
    display: flex;
    align-items: flex-start;
    font-family: "Liberation Sans", sans-serif;
    line-height: 30px;
    letter-spacing: 0;
}

.fsize svg { margin-top: 7px; margin-left: 1px; }
.grow { font-size: 27px; margin-left: 5px; }
.shrink { font-size: 23px; margin-left: 10px; }

.font-row2 {
    margin: 14px 0 0 -3px;
}

.fmt-b { font-weight: 700; font-size: 19px; }
.fmt-i { font: italic 20px "Liberation Sans", sans-serif; }
.fmt-u { text-decoration: underline; font-size: 19px; }
.fmt-a { font: 25px "Liberation Sans", sans-serif; }

/* alignment */
.align-body {
    padding-left: 10px;
}

.on-cell {
    position: relative;
}

.on {
    width: 36px;
    height: 36px;
    margin-top: 4px;
    background: #ececec;
    border: 1px solid #a8a8a8;
    border-radius: 7px;
    display: flex;
    align-items: center;
    justify-content: center;
    flex: none;
}

.t-ab {
    font: 16px "Open Sans", sans-serif;
    fill: #333;
}

.t-dec {
    font: 13px "Open Sans", sans-serif;
    fill: #333;
}

.t-az {
    font: 600 14px "Open Sans", sans-serif;
    fill: #333;
}

.az-a { fill: #2b88d8; }

/* number */
.num-body {
    padding-left: 13px;
}

.num-select {
    margin-top: 3px;
}

.n-pct {
    font-size: 30px;
}

.n-comma {
    font: bold 44px "Liberation Serif", serif;
    line-height: 20px;
    padding-bottom: 24px;
}

/* styles and cells */
.styles-body,
.cells-body {
    padding: 2px 0 0 19px;
    gap: 9px;
}

.item {
    gap: 5px;
    white-space: nowrap;
}

.item > svg:last-child { margin-left: 3px; }
.ins { width: 110px; }
.del { width: 116px; }
.fmtc { width: 103px; }
.ins, .del, .fmtc { gap: 6px; }
.push { margin-left: auto !important; }

/* editing */
.edit-body {
    padding: 2px 0 0 18px;
    gap: 9px;
}

/* big buttons */
.big-body {
    display: flex;
    justify-content: center;
    padding-top: 6px;
}

.big {
    width: 64px;
    display: flex;
    flex-direction: column;
    align-items: center;
    text-align: center;
    line-height: 23.500px;
    white-space: nowrap;
}

.big span {
    margin-top: 7px;
}

.pdf-icon {
    margin-bottom: -2px;
}

.ai-body {
    justify-content: flex-start;
    padding-left: 14px;
    gap: 5px;
}

.collapse {
    flex: 1;
    display: flex;
    align-items: flex-end;
    justify-content: center;
    padding: 0 0 21px 8px;
    color: #333;
}

/* formula bar */
.formula {
    margin: 13px 14px 0 12px;
    height: 33px;
    display: flex;
    align-items: stretch;
}

.namebox, .fxbox, .fvalue {
    background: #fff;
    border-radius: 6px;
    box-shadow: 0 1px 2px rgba(0, 0, 0, 0.18);
    display: flex;
    align-items: center;
    font-family: "Liberation Sans", sans-serif;
    font-size: 19.500px;
    color: #222;
}

.namebox {
    width: 151px;
    padding: 0 8px;
    justify-content: space-between;
}

.fdots {
    width: 31px;
    display: flex;
    flex-direction: column;
    align-items: center;
    justify-content: center;
    gap: 3px;
}

.fdots i, .tabdots i {
    width: 3px;
    height: 3px;
    background: #444;
    display: block;
}

.fxbox {
    width: 127px;
    padding-left: 10px;
    gap: 16px;
}

.fx {
    font: italic bold 25px "Liberation Serif", serif;
    color: #333;
}

.fx-chev {
    color: #aaa;
    margin-left: -9px;
}

.fvalue {
    margin-left: 7px;
    flex: 1;
    padding: 0 9px 0 16px;
    justify-content: space-between;
}

/* sheet */
.sheet {
    margin-top: 11px;
    height: 723px;
    display: flex;
}

.grid {
    width: 1889px;
    height: 723px;
    overflow: hidden;
    background: #fff;
}

table {
    width: 1889px;
    table-layout: fixed;
    border-collapse: collapse;
    font-family: Roboto, sans-serif;
    font-size: 19.800px;
    line-height: 24px;
    color: #222;
}

.c-rh { width: 40px; }
.c-a { width: 71px; }
.c-b { width: 127px; }
.c-c { width: 144px; }
.c-d { width: 113px; }
.c-e { width: 121px; }
.c-f { width: 159px; }
.c-g { width: 87px; }
.c-h { width: 118px; }
.c-i { width: 85px; }
.c-j { width: 220px; }
.c-k { width: 322px; }
.c-l { width: 137px; }
.c-m { width: 145px; }

thead th {
    height: 28px;
    padding: 3px 0 0;
    background: #f3f3f3;
    border-bottom: 2px solid #a8a8a8;
    border-right: 1px solid #dcdcdc;
    font-weight: 400;
    font-size: 19px;
    color: #444;
    text-align: center;
}

.corner {
    position: relative;
    border-right: 0;
}

.corner svg {
    margin: -3px 0 0 15px;
}

tbody th {
    height: 29px;
    padding: 1px 0 0;
    background: #f1f1f1;
    border-right: 1px solid #a8a8a8;
    border-bottom: 1px solid #d8d8d8;
    font-weight: 400;
    font-size: 19px;
    color: #444;
    text-align: center;
}

tbody td {
    height: 29px;
    padding: 2px 3px 0;
    white-space: nowrap;
    overflow: hidden;
}

tbody td:nth-child(5),
td.r {
    text-align: right;
    letter-spacing: -0.4px;
}

tr.hdr td {
    background: #156082;
    color: #fff;
    font-size: 19px;
    font-weight: 700;
    letter-spacing: -0.1px;
    text-align: left;
}

tr.selected th {
    background: #e0e0e0;
    color: #107c41;
    border-right: 2px solid #107c41;
}

.vscroll {
    position: relative;
    margin-left: 4px;
    width: 25px;
    height: 726px;
    background: #f3f3f3;
    border-radius: 12px;
    display: flex;
    flex-direction: column;
    align-items: center;
    padding-top: 8px;
}

.tri-up, .tri-down {
    width: 0;
    height: 0;
    border-left: 7px solid transparent;
    border-right: 7px solid transparent;
}

.tri-up { border-bottom: 10px solid #6f6f6f; }
.tri-down { border-top: 10px solid #6f6f6f; margin-top: auto; margin-bottom: 9px; }

.vthumb {
    margin-top: 8px;
    width: 12px;
    height: 26px;
    border-radius: 6px;
    background: #757575;
}

/* sheet tabs */
.sheetbar {
    height: 48px;
    display: flex;
    align-items: flex-start;
    color: #3a3a3a;
}

.navarrows {
    display: flex;
    gap: 40px;
    padding: 15px 0 0 35px;
    width: 182px;
}

.sheet-tab {
    white-space: nowrap;
    padding-top: 9px;
    line-height: 30px;
    width: 187px;
    font-size: 20px;
    letter-spacing: -0.17px;
}

.sheet-tab.active {
    width: 218px;
    height: 42px;
    margin: 0 6px 0 6px;
    background: #fff;
    border-radius: 0 0 8px 8px;
    padding: 6px 12px 0;
    line-height: 28px;
    letter-spacing: -0.2px;
}

.sheet-tab.active b {
    display: block;
    font-weight: 600;
    height: 32px;
    border-bottom: 3px solid #107c41;
}

.tab-sep {
    width: 1px;
    height: 28px;
    margin-top: 10px;
    background: #c8c8c8;
}

.addsheet {
    margin: 14px 0 0 63px;
}

.tabdots {
    display: flex;
    flex-direction: column;
    gap: 3px;
    margin: 16px 0 0 473px;
}

.hscroll {
    margin: 10px 0 0 22px;
    width: 710px;
    height: 26px;
    border-radius: 13px;
    background: #f0f2f5;
    display: flex;
    align-items: center;
    padding: 0 9px;
}

.tri-left, .tri-right {
    width: 0;
    height: 0;
    border-top: 7px solid transparent;
    border-bottom: 7px solid transparent;
}

.tri-left { border-right: 10px solid #6f6f6f; }
.tri-right { border-left: 10px solid #6f6f6f; margin-left: auto; }

.hthumb {
    margin-left: 7px;
    width: 508px;
    height: 12px;
    border-radius: 6px;
    background: #707070;
}

.statusbar {
    height: 6px;
    background: #f3f3f3;
    padding-left: 1475px;
}

.statusbar span {
    display: block;
    width: 60px;
    height: 6px;
    background: #e6e6e6;
}

/* banner over the screenshot */
.after {
    position: absolute;
    left: 695px;
    top: 112px;
    font-family: "Open Sans", sans-serif;
    font-size: 190px;
    line-height: 223px;
    letter-spacing: -5px;
    color: #ffc000;
    text-shadow: 2px 7px 8px rgba(0, 0, 0, 0.4);
    white-space: nowrap;
}

.after-af {
    letter-spacing: 1px;
}

.after-e {
    letter-spacing: -11px;
}
```
